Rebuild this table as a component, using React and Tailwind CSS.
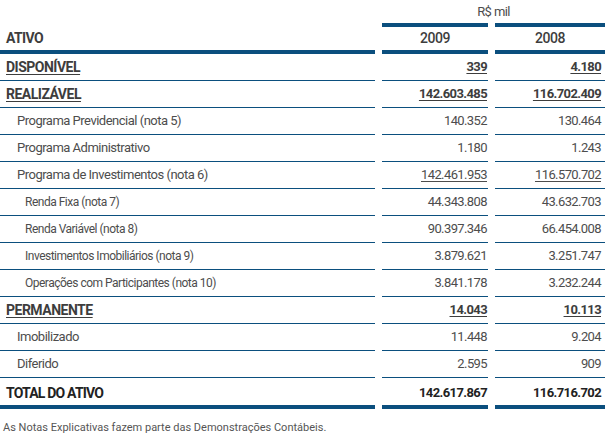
const rows = [
  { label: 'DISPONÍVEL', a: '339', b: '4.180', kind: 'group' },
  { label: 'REALIZÁVEL', a: '142.603.485', b: '116.702.409', kind: 'group' },
  { label: 'Programa Previdencial (nota 5)', a: '140.352', b: '130.464', kind: 'item' },
  { label: 'Programa Administrativo', a: '1.180', b: '1.243', kind: 'item' },
  { label: 'Programa de Investimentos (nota 6)', a: '142.461.953', b: '116.570.702', kind: 'item', underline: true },
  { label: 'Renda Fixa (nota 7)', a: '44.343.808', b: '43.632.703', kind: 'sub' },
  { label: 'Renda Variável (nota 8)', a: '90.397.346', b: '66.454.008', kind: 'sub' },
  { label: 'Investimentos Imobiliários (nota 9)', a: '3.879.621', b: '3.251.747', kind: 'sub' },
  { label: 'Operações com Participantes (nota 10)', a: '3.841.178', b: '3.232.244', kind: 'sub' },
  { label: 'PERMANENTE', a: '14.043', b: '10.113', kind: 'group' },
  { label: 'Imobilizado', a: '11.448', b: '9.204', kind: 'item' },
  { label: 'Diferido', a: '2.595', b: '909', kind: 'item' },
]

const font = { fontFamily: 'Roboto, "Liberation Sans", sans-serif' }

function Row({ r }) {
  const labelCls =
    r.kind === 'group'
      ? 'pl-[6px] font-bold underline underline-offset-2 text-[#3d3d3d] text-[14px] tracking-[-0.5px]'
      : r.kind === 'item'
      ? 'pl-[17px] text-[#4d4d4d] text-[13px] tracking-[-0.5px]'
      : 'pl-[25px] text-[#4d4d4d] text-[12px] tracking-[-0.5px]'
  const numCls =
    r.kind === 'group'
      ? 'font-bold underline underline-offset-2 text-[#3d3d3d]'
      : r.underline
      ? 'underline underline-offset-2 text-[#4d4d4d]'
      : 'text-[#4d4d4d]'
  return (
    <div className="grid grid-cols-[375px_106px_110px] gap-x-[7px] h-[27px]">
      <div className={`flex items-center border-b border-[#0b4f7e] ${labelCls}`}>{r.label}</div>
      <div className={`flex items-center justify-end pr-[1px] border-b border-[#0b4f7e] text-[13px] tracking-[-0.6px] ${numCls}`}>{r.a}</div>
      <div className={`flex items-center justify-end pr-[4px] border-b border-[#0b4f7e] text-[13px] tracking-[-0.6px] ${numCls}`}>{r.b}</div>
    </div>
  )
}

export default function App() {
  return (
    <div className="w-[605px] h-[435px] bg-white overflow-hidden" style={font}>
      <div className="grid grid-cols-[375px_106px_110px] gap-x-[7px] h-[23px]">
        <div />
        <div className="col-span-2 flex items-center justify-center pt-[1px] text-[13px] tracking-[-0.6px] text-[#4d4d4d]">R$ mil</div>
      </div>
      <div className="grid grid-cols-[375px_106px_110px] gap-x-[7px] h-[31px]">
        <div className="flex items-center pl-[6px] pt-[4px] font-bold text-[14px] tracking-[-0.6px] text-[#3d3d3d] border-b-4 border-[#0b4f7e]">ATIVO</div>
        <div className="flex items-center justify-center text-[14px] tracking-[-0.5px] text-[#3d3d3d] font-medium border-t-4 border-b-4 border-[#0b4f7e]">2009</div>
        <div className="flex items-center justify-center text-[14px] tracking-[-0.5px] text-[#3d3d3d] font-medium border-t-4 border-b-4 border-[#0b4f7e]">2008</div>
      </div>
      {rows.map((r) => (
        <Row key={r.label} r={r} />
      ))}
      <div className="grid grid-cols-[375px_106px_110px] gap-x-[7px] h-[31px]">
        <div className="flex items-center pl-[6px] pt-[3px] font-bold text-[14px] tracking-[-0.8px] text-[#222] border-b-4 border-[#0b4f7e]">TOTAL DO ATIVO</div>
        <div className="flex items-center justify-end pr-[1px] pt-[3px] font-bold text-[13px] tracking-[-0.6px] text-[#222] border-b-4 border-[#0b4f7e]">142.617.867</div>
        <div className="flex items-center justify-end pr-[4px] pt-[3px] font-bold text-[13px] tracking-[-0.6px] text-[#222] border-b-4 border-[#0b4f7e]">116.716.702</div>
      </div>
      <p className="pl-[3px] pt-[11px] text-[11px] text-[#555]">As Notas Explicativas fazem parte das Demonstrações Contábeis.</p>
    </div>
  )
}
